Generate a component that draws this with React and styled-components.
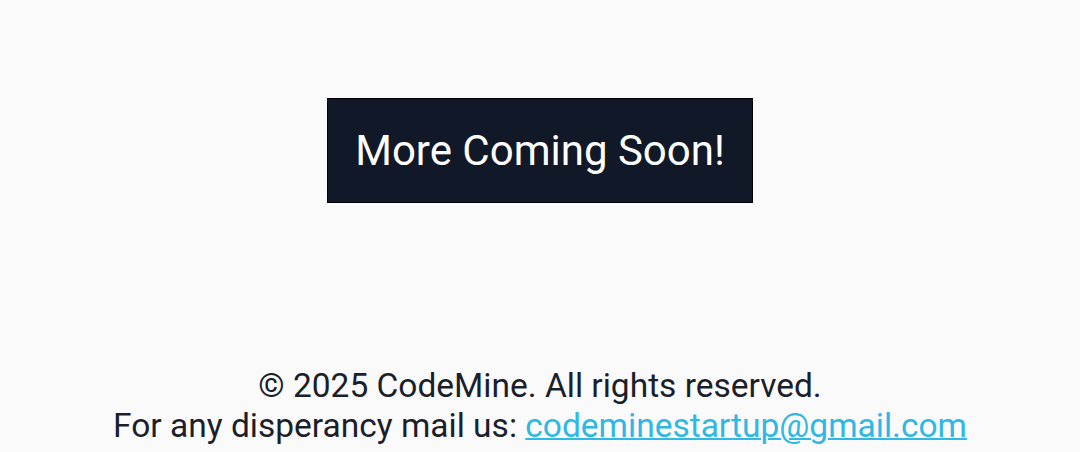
import React from "react";
import styled, { createGlobalStyle } from "styled-components";

const GlobalStyle = createGlobalStyle`
  html, body {
    margin: 0;
    padding: 0;
    background: #fafafa;
    font-family: Roboto, "Noto Sans", sans-serif;
  }
`;

function App() {
  return (
    <Page>
      <GlobalStyle />
      <Content>
        <SoonBox>More Coming Soon!</SoonBox>
      </Content>
      <Footer>
        <p>© 2025 CodeMine. All rights reserved.</p>
        <p>
          For any disperancy mail us:{" "}
          <MailLink href="mailto:codeminestartup@gmail.com">
            codeminestartup@gmail.com
          </MailLink>
        </p>
      </Footer>
    </Page>
  );
}

const Page = styled.div`
  height: 100vh;
  display: flex;
  flex-direction: column;
  background: #fafafa;
`;

const Content = styled.main`
  flex: 1;
  display: flex;
  justify-content: center;
  align-items: flex-start;
  padding-top: 98px;
`;

const SoonBox = styled.div`
  width: 426px;
  height: 105px;
  box-sizing: border-box;
  display: flex;
  align-items: center;
  justify-content: center;
  background: #111827;
  border: 1px solid #000;
  color: #fff;
  font-size: 42px;
`;

const Footer = styled.footer`
  text-align: center;
  color: #1a1f2b;
  font-size: 33.5px;
  line-height: 40px;
  padding-bottom: 6px;

  p {
    margin: 0;
  }
`;

const MailLink = styled.a`
  color: #2fb8e4;
  text-decoration: underline;
  text-decoration-thickness: 2px;
`;

export default App;
